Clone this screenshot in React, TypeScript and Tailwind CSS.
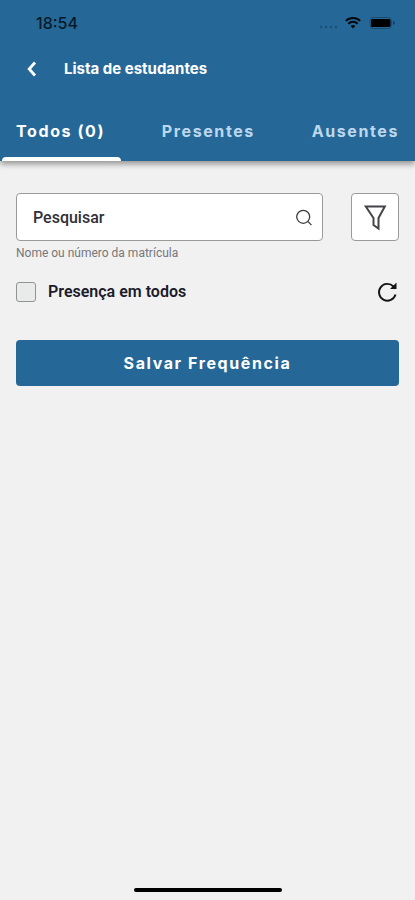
import React, { useState } from 'react';

interface Tab {
  id: string;
  label: string;
}

const tabs: Tab[] = [
  { id: 'all', label: 'Todos (0)' },
  { id: 'present', label: 'Presentes' },
  { id: 'absent', label: 'Ausentes' },
];

const StatusBar: React.FC = () => (
  <div className="flex h-[46px] items-center justify-between pl-9 pr-5 text-[#051a28]">
    <span className="text-base font-medium leading-6">18:54</span>
    <div className="flex items-center gap-2">
      <svg className="h-4 w-5" viewBox="0 0 20 16" fill="#1a4f75">
        <circle cx="4" cy="12" r="1.2" />
        <circle cx="9" cy="12" r="1.2" />
        <circle cx="14" cy="12" r="1.2" />
        <circle cx="19" cy="12" r="1.2" />
      </svg>
      <svg className="h-4 w-4" viewBox="0 0 16 16" fill="none" stroke="#02080d" strokeWidth="2">
        <path d="M.8 5.9a10.2 10.2 0 0 1 14.4 0" />
        <path d="M3.3 8.7a6.7 6.7 0 0 1 9.4 0" />
        <path d="M8 13.6 5.6 11.1a3.5 3.5 0 0 1 4.8 0Z" fill="#02080d" stroke="none" />
      </svg>
      <svg className="h-4 w-[26px]" viewBox="0 0 26 16">
        <rect x="1" y="2.5" width="21.5" height="11" rx="3" fill="none" stroke="#1b4c70" />
        <rect x="2" y="4" width="19.5" height="8" rx="1.5" fill="#000000" />
        <path d="M24 6v4c1.1-.4 1.8-1.1 1.8-2S25.1 6.400 24 6Z" fill="#123d5c" />
      </svg>
    </div>
  </div>
);

const App: React.FC = () => {
  const [activeTab, setActiveTab] = useState('all');
  const [search, setSearch] = useState('');
  const [allPresent, setAllPresent] = useState(false);

  return (
    <div className="flex min-h-screen flex-col bg-[#f1f1f1] font-['Inter',sans-serif]">
      <header className="bg-[#256898] shadow-[0_3px_6px_rgba(0,0,0,0.4)]">
        <StatusBar />

        <div className="flex h-[46px] items-center gap-4 pl-4">
          <button type="button" aria-label="Voltar" className="flex h-8 w-8 items-center justify-center text-white">
            <svg className="h-4 w-4" viewBox="0 0 16 16" fill="none" stroke="currentColor" strokeWidth="2.8">
              <path d="M11 1.5 5.2 8 11 14.500" />
            </svg>
          </button>
          <h1 className="text-[15px] font-bold leading-5 text-white">Lista de estudantes</h1>
        </div>

        {/* Attendance tabs */}
        <nav className="flex h-[69px] justify-between px-4" role="tablist">
          {tabs.map((tab) => (
            <button
              key={tab.id}
              type="button"
              role="tab"
              aria-selected={activeTab === tab.id}
              onClick={() => setActiveTab(tab.id)}
              className={`relative cursor-pointer pt-2 text-base font-bold tracking-widest ${
                activeTab === tab.id ? 'text-white' : 'text-[#bdd7ed]'
              }`}
            >
              {tab.label}
              {activeTab === tab.id && (
                <span className="absolute -left-3.5 -right-4 bottom-0 h-1 rounded-t bg-white" />
              )}
            </button>
          ))}
        </nav>
      </header>

      <main className="flex-1 px-4 pt-8">
        <div className="flex gap-7">
          <div className="relative min-w-0 flex-1">
            <input
              type="text"
              aria-label="Pesquisar"
              aria-describedby="search-help"
              placeholder="Pesquisar"
              value={search}
              onChange={(e) => setSearch(e.target.value)}
              className="h-12 w-full rounded border border-[#9a9a9a] bg-white pl-4 pr-10 font-['Roboto',sans-serif] text-base font-medium text-[#303036] placeholder:text-[#303036]"
            />
            <svg
              className="pointer-events-none absolute right-2.5 top-4 h-[18px] w-[18px]"
              viewBox="0 0 18 18"
              fill="none"
              stroke="#3c3c3c"
              strokeWidth="1.3"
            >
              <circle cx="8.2" cy="7.8" r="6.5" />
              <path d="m12.8 12.400 3.700 3.700" />
            </svg>
          </div>
          <button
            type="button"
            aria-label="Filtrar"
            className="flex h-12 w-12 items-center justify-center rounded border border-[#9a9a9a] bg-white"
          >
            <svg className="h-7 w-6" viewBox="0 0 24 28" fill="none" stroke="#444448" strokeWidth="2">
              <path d="M2.800 3.500h19l-6.300 11.500v10.500l-5-3.500v-7Z" />
            </svg>
          </button>
        </div>
        <p id="search-help" className="mt-1 font-['Roboto',sans-serif] text-xs leading-4 text-[#77777a]">
          Nome ou número da matrícula
        </p>

        <div className="mt-[21px] flex h-5 items-center justify-between">
          <label className="flex items-center gap-3 font-['Roboto',sans-serif] text-base font-semibold leading-5 text-[#1b1b2b]">
            <input
              type="checkbox"
              checked={allPresent}
              onChange={(e) => setAllPresent(e.target.checked)}
              className="h-5 w-5 appearance-none rounded-[3px] border border-[#929292] bg-[#e9eaea] checked:bg-[#256898]"
            />
            Presença em todos
          </label>
          <button type="button" aria-label="Atualizar" className="text-[#151515]">
            <svg className="h-6 w-6" viewBox="0 0 24 24" fill="none" stroke="currentColor" strokeWidth="1.900">
              <path d="M20.500 14.500A8.400 8.400 0 1 1 18.500 6.500L20.500 8.500" />
              <path d="M21.500 2.500v6.500H15Z" fill="currentColor" stroke="none" />
            </svg>
          </button>
        </div>

        <button
          type="button"
          className="mt-[38px] h-[46px] w-full rounded bg-[#256898] text-base font-bold tracking-widest text-white"
        >
          Salvar Frequência
        </button>
      </main>

      <div className="flex justify-center pb-2">
        <div className="h-1 w-[148px] rounded-full bg-black" />
      </div>
    </div>
  );
};

export default App;
